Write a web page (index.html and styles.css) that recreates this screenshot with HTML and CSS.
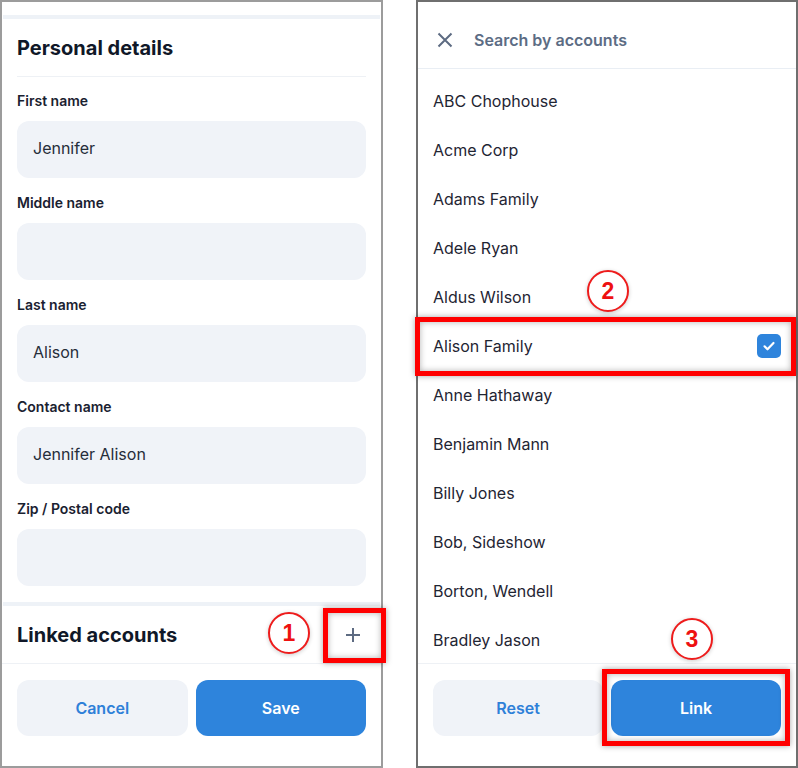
FILE: index.html
```html
<!DOCTYPE html>
<html lang="en">
<head>
    <meta charset="UTF-8">
    <meta name="viewport" content="width=device-width, initial-scale=1.0">
    <title>Link accounts</title>
    <link rel="stylesheet" href="styles.css">
</head>
<body>
    <div class="screens">
        <!-- Kontakta forma -->
        <section class="panel">
            <div class="band"></div>
            <div class="form-body">
                <h2 class="section-title">Personal details</h2>
                <div class="fields">
                    <div class="field">
                        <label>First name</label>
                        <div class="input">Jennifer</div>
                    </div>
                    <div class="field">
                        <label>Middle name</label>
                        <div class="input"></div>
                    </div>
                    <div class="field">
                        <label>Last name</label>
                        <div class="input">Alison</div>
                    </div>
                    <div class="field">
                        <label>Contact name</label>
                        <div class="input">Jennifer Alison</div>
                    </div>
                    <div class="field">
                        <label>Zip / Postal code</label>
                        <div class="input"></div>
                    </div>
                </div>
            </div>
            <div class="band"></div>
            <div class="linked-row">
                <h2 class="linked-title">Linked accounts</h2>
                <span class="icon-btn">
                    <svg width="16" height="16" viewBox="0 0 16 16"><path d="M8 1v14M1 8h14" stroke="#5d6b82" stroke-width="2" fill="none"/></svg>
                </span>
            </div>
            <div class="footer">
                <button class="btn btn-light">Cancel</button>
                <button class="btn btn-primary">Save</button>
            </div>
        </section>

        <!-- Kontu meklēšana -->
        <section class="panel">
            <div class="search-head">
                <svg width="16" height="16" viewBox="0 0 16 16"><path d="M1.5 1.5l13 13M14.5 1.5l-13 13" stroke="#5d6b82" stroke-width="2" fill="none"/></svg>
                <span class="search-text">Search by accounts</span>
            </div>
            <ul class="account-list">
                <li>ABC Chophouse</li>
                <li>Acme Corp</li>
                <li>Adams Family</li>
                <li>Adele Ryan</li>
                <li>Aldus Wilson</li>
                <li>Alison Family
                    <span class="checkbox">
                        <svg width="16" height="16" viewBox="0 0 16 16"><path d="M3.5 8.3l3 3L12.5 5" stroke="#fff" stroke-width="2.2" fill="none" stroke-linecap="round" stroke-linejoin="round"/></svg>
                    </span>
                </li>
                <li>Anne Hathaway</li>
                <li>Benjamin Mann</li>
                <li>Billy Jones</li>
                <li>Bob, Sideshow</li>
                <li>Borton, Wendell</li>
                <li>Bradley Jason</li>
            </ul>
            <div class="footer">
                <button class="btn btn-light">Reset</button>
                <button class="btn btn-primary">Link</button>
            </div>
        </section>

        <!-- Anotācijas -->
        <div class="mark mark-plus"></div>
        <div class="step step-1">1</div>
        <div class="mark mark-row"></div>
        <div class="step step-2">2</div>
        <div class="mark mark-link"></div>
        <div class="step step-3">3</div>
    </div>
</body>
</html>
```

FILE: styles.css
```css
/* Pamata stils */
body {
    margin: 0;
    background-color: #fff;
    font-family: Inter, "Noto Sans", sans-serif;
    color: #1c2331;
}
.screens {
    position: relative;
    display: flex;
    gap: 33px;
    width: 798px;
    height: 768px;
}
.panel {
    box-sizing: border-box;
    display: flex;
    flex-direction: column;
    width: 383px;
    height: 768px;
    border: 2px solid #9c9c9c;
    background-color: #fff;
    overflow: hidden;
}
.panel + .panel {
    width: 382px;
    border-color: #6f6f6f;
}
.band {
    height: 4px;
    background-color: #eef2f7;
    margin: 13px 1px 0;
}
.form-body {
    padding: 0 15px;
}
.section-title {
    margin: 0;
    padding: 15px 0 14px;
    font-size: 20px;
    line-height: 28px;
    font-weight: 700;
    color: #101828;
    border-bottom: 1px solid #eef1f5;
}
.fields {
    padding-top: 14px;
    padding-bottom: 1px;
}
.field {
    margin-bottom: 15px;
}
.field label {
    display: block;
    font-size: 14px;
    line-height: 20px;
    font-weight: 600;
    color: #1a2130;
    margin-bottom: 10px;
}
.input {
    box-sizing: border-box;
    height: 57px;
    padding: 0 16px;
    border-radius: 12px;
    background-color: #f0f3f8;
    font-size: 16px;
    line-height: 55px;
    color: #262d3a;
}
.form-body + .band {
    margin-top: 0;
}
.linked-row {
    display: flex;
    align-items: center;
    justify-content: space-between;
    height: 57px;
    padding: 0 15px;
}
.linked-title {
    margin: 0;
    font-size: 20px;
    font-weight: 700;
    color: #101828;
}
.icon-btn {
    display: flex;
    margin-right: 5px;
}
.footer {
    display: flex;
    gap: 8px;
    padding: 16px 15px 30px;
    border-top: 1px solid #eef1f5;
    margin-top: auto;
}
.btn {
    flex: 1;
    height: 56px;
    border: none;
    border-radius: 12px;
    font-family: inherit;
    font-size: 16px;
    font-weight: 600;
    cursor: pointer;
}
.btn-light {
    background-color: #f0f3f8;
    color: #2e80d8;
}
.btn-primary {
    background-color: #2e84dc;
    color: #fff;
}
.search-head {
    display: flex;
    align-items: center;
    gap: 21px;
    height: 56px;
    padding: 10px 0 0 19px;
    border-bottom: 1px solid #e9eef4;
}
.search-text {
    font-size: 16px;
    font-weight: 600;
    color: #5c6c84;
}
.account-list {
    list-style: none;
    margin: 0;
    padding: 7px 15px 0;
    flex: 1;
    overflow: hidden;
}
.account-list li {
    display: flex;
    align-items: center;
    justify-content: space-between;
    height: 49px;
    font-size: 16px;
    color: #1f2533;
}
.checkbox {
    display: flex;
    align-items: center;
    justify-content: center;
    width: 24px;
    height: 24px;
    border-radius: 5px;
    background-color: #2e84dc;
}
/* Sarkanās atzīmes virs ekrāniem */
.mark {
    position: absolute;
    box-sizing: border-box;
    border: 5px solid #ff0000;
    box-shadow: 0 0 6px rgba(0, 0, 0, 0.35), inset 0 0 6px rgba(0, 0, 0, 0.3);
}
.mark-plus {
    left: 323px;
    top: 608px;
    width: 63px;
    height: 55px;
}
.mark-row {
    left: 415px;
    top: 317px;
    width: 381px;
    height: 59px;
}
.mark-link {
    left: 602px;
    top: 669px;
    width: 188px;
    height: 77px;
}
.step {
    position: absolute;
    box-sizing: border-box;
    width: 42px;
    height: 42px;
    border: 2px solid #ee1c1c;
    border-radius: 50%;
    background-color: #fff;
    box-shadow: 0 1px 4px rgba(0, 0, 0, 0.2);
    font-family: "Liberation Sans", Arial, sans-serif;
    font-size: 23px;
    font-weight: 700;
    line-height: 38px;
    text-align: center;
    color: #ee1111;
}
.step-1 {
    left: 268px;
    top: 612px;
}
.step-2 {
    left: 587px;
    top: 270px;
}
.step-3 {
    left: 671px;
    top: 618px;
}
```
